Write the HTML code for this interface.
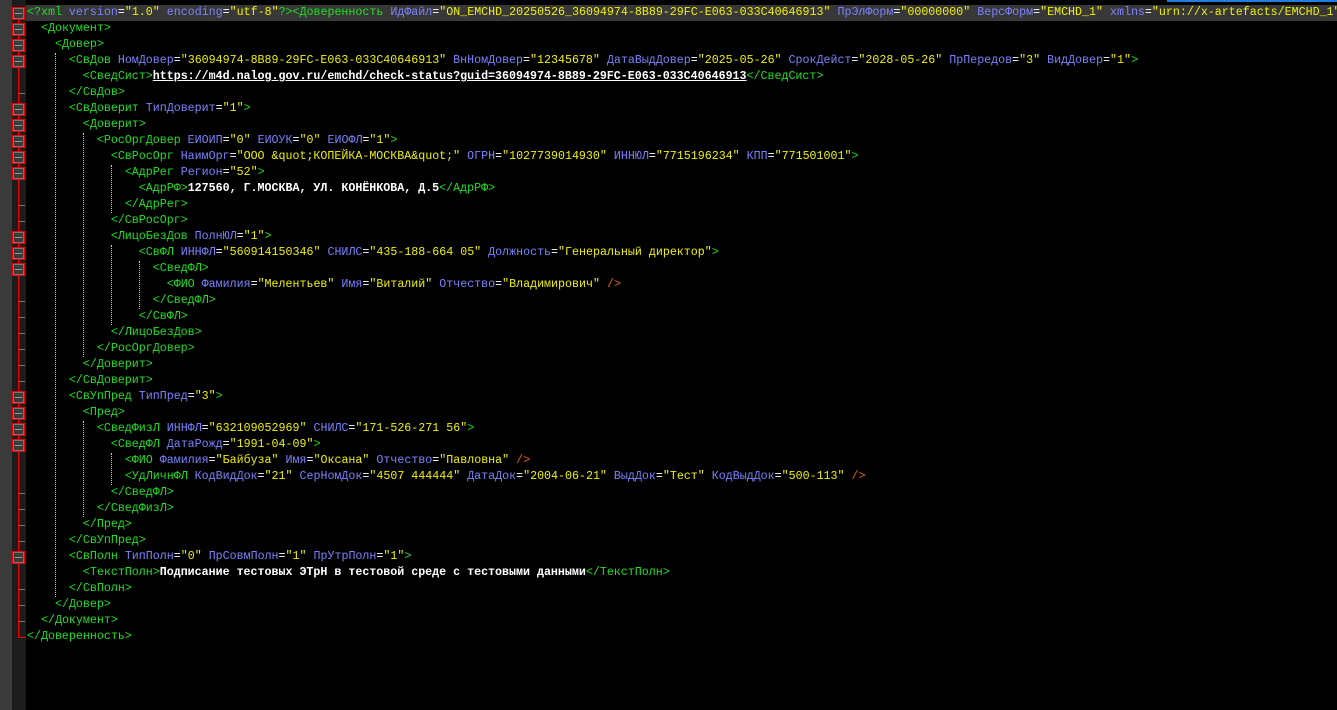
<!DOCTYPE html>
<html><head><meta charset="utf-8"><style>
*{margin:0;padding:0}
body{width:1337px;height:710px;background:#000;overflow:hidden;position:relative;font-family:"Liberation Mono","DejaVu Sans Mono",monospace;font-size:11.65px}
#lm{position:absolute;left:0;top:0;width:12px;height:710px;background:#3a3a3a}
#fm{position:absolute;left:12px;top:0;width:14px;height:710px;background:#1c1c1c}
#topbar{position:absolute;left:1167px;top:0;width:170px;height:2px;background:#1e7fe0}
.cur{position:absolute;left:26px;top:5px;width:1311px;height:16px;background:#383838}
.l{position:absolute;left:27px;height:16px;line-height:16px;white-space:pre;color:#fff}
.t{color:#1ee01e}.a{color:#7a82ff}.v{color:#f0f000}.e{color:#fff}.x{color:#fff;font-weight:bold}.u{color:#fff;font-weight:bold;text-decoration:underline}.s{color:#e0601a}
.g{position:absolute;border-left:1px dotted #ccc;width:0}
.rl{position:absolute;left:18px;width:1px;background:#e00}
.b{position:absolute;left:12px;width:11px;height:11px;border:1px solid #e00;background:#3a3a3a}
.b:after{content:"";position:absolute;left:2px;top:5px;width:7px;height:1px;background:#999}
.b:before{content:"";position:absolute;left:0;top:0;width:9px;height:9px;border:1px solid #777}
.k{position:absolute;left:19px;width:6px;height:1px;background:#777}
</style></head><body>
<div id="lm"></div><div id="fm"></div><div id="topbar"></div>
<div class="cur"></div>
<div class="rl" style="top:12px;height:626px"></div>
<div style="position:absolute;left:18px;top:637px;width:8px;height:1px;background:#e00"></div>

<div class="g" style="left:55px;top:53px;height:544px"></div>
<div class="g" style="left:83px;top:133px;height:224px"></div>
<div class="g" style="left:83px;top:421px;height:96px"></div>
<div class="g" style="left:111px;top:165px;height:48px"></div>
<div class="g" style="left:111px;top:245px;height:80px"></div>
<div class="g" style="left:111px;top:453px;height:32px"></div>
<div class="g" style="left:139px;top:261px;height:48px"></div>

<div class="b" style="top:7px"></div><div class="b" style="top:23px"></div><div class="b" style="top:39px"></div><div class="b" style="top:55px"></div>
<div class="k" style="top:93px"></div>
<div class="b" style="top:103px"></div><div class="b" style="top:119px"></div><div class="b" style="top:135px"></div><div class="b" style="top:151px"></div><div class="b" style="top:167px"></div>
<div class="k" style="top:205px"></div><div class="k" style="top:221px"></div>
<div class="b" style="top:231px"></div><div class="b" style="top:247px"></div><div class="b" style="top:263px"></div>
<div class="k" style="top:301px"></div><div class="k" style="top:317px"></div><div class="k" style="top:333px"></div><div class="k" style="top:349px"></div><div class="k" style="top:365px"></div><div class="k" style="top:381px"></div>
<div class="b" style="top:391px"></div><div class="b" style="top:407px"></div><div class="b" style="top:423px"></div><div class="b" style="top:439px"></div>
<div class="k" style="top:493px"></div><div class="k" style="top:509px"></div><div class="k" style="top:525px"></div><div class="k" style="top:541px"></div>
<div class="b" style="top:551px"></div>
<div class="k" style="top:589px"></div><div class="k" style="top:605px"></div><div class="k" style="top:621px"></div>

<div class="l" style="top:5px"><span class="t">&lt;?xml </span><span class="a">version</span><span class="e">=</span><span class="v">"1.0"</span> <span class="a">encoding</span><span class="e">=</span><span class="v">"utf-8"</span><span class="t">?&gt;&lt;Доверенность </span><span class="a">ИдФайл</span><span class="e">=</span><span class="v">"ON_EMCHD_20250526_36094974-8B89-29FC-E063-033C40646913"</span> <span class="a">ПрЭлФорм</span><span class="e">=</span><span class="v">"00000000"</span> <span class="a">ВерсФорм</span><span class="e">=</span><span class="v">"EMCHD_1"</span> <span class="a">xmlns</span><span class="e">=</span><span class="v">"urn://x-artefacts/EMCHD_1"</span></div>
<div class="l" style="top:21px">  <span class="t">&lt;Документ&gt;</span></div>
<div class="l" style="top:37px">    <span class="t">&lt;Довер&gt;</span></div>
<div class="l" style="top:53px">      <span class="t">&lt;СвДов </span><span class="a">НомДовер</span><span class="e">=</span><span class="v">"36094974-8B89-29FC-E063-033C40646913"</span> <span class="a">ВнНомДовер</span><span class="e">=</span><span class="v">"12345678"</span> <span class="a">ДатаВыдДовер</span><span class="e">=</span><span class="v">"2025-05-26"</span> <span class="a">СрокДейст</span><span class="e">=</span><span class="v">"2028-05-26"</span> <span class="a">ПрПередов</span><span class="e">=</span><span class="v">"3"</span> <span class="a">ВидДовер</span><span class="e">=</span><span class="v">"1"</span><span class="t">&gt;</span></div>
<div class="l" style="top:69px">        <span class="t">&lt;СведСист&gt;</span><span class="u">https://m4d.nalog.gov.ru/emchd/check-status?guid=36094974-8B89-29FC-E063-033C40646913</span><span class="t">&lt;/СведСист&gt;</span></div>
<div class="l" style="top:85px">      <span class="t">&lt;/СвДов&gt;</span></div>
<div class="l" style="top:101px">      <span class="t">&lt;СвДоверит </span><span class="a">ТипДоверит</span><span class="e">=</span><span class="v">"1"</span><span class="t">&gt;</span></div>
<div class="l" style="top:117px">        <span class="t">&lt;Доверит&gt;</span></div>
<div class="l" style="top:133px">          <span class="t">&lt;РосОргДовер </span><span class="a">ЕИОИП</span><span class="e">=</span><span class="v">"0"</span> <span class="a">ЕИОУК</span><span class="e">=</span><span class="v">"0"</span> <span class="a">ЕИОФЛ</span><span class="e">=</span><span class="v">"1"</span><span class="t">&gt;</span></div>
<div class="l" style="top:149px">            <span class="t">&lt;СвРосОрг </span><span class="a">НаимОрг</span><span class="e">=</span><span class="v">"ООО &amp;quot;КОПЕЙКА-МОСКВА&amp;quot;"</span> <span class="a">ОГРН</span><span class="e">=</span><span class="v">"1027739014930"</span> <span class="a">ИННЮЛ</span><span class="e">=</span><span class="v">"7715196234"</span> <span class="a">КПП</span><span class="e">=</span><span class="v">"771501001"</span><span class="t">&gt;</span></div>
<div class="l" style="top:165px">              <span class="t">&lt;АдрРег </span><span class="a">Регион</span><span class="e">=</span><span class="v">"52"</span><span class="t">&gt;</span></div>
<div class="l" style="top:181px">                <span class="t">&lt;АдрРФ&gt;</span><span class="x">127560, Г.МОСКВА, УЛ. КОНЁНКОВА, Д.5</span><span class="t">&lt;/АдрРФ&gt;</span></div>
<div class="l" style="top:197px">              <span class="t">&lt;/АдрРег&gt;</span></div>
<div class="l" style="top:213px">            <span class="t">&lt;/СвРосОрг&gt;</span></div>
<div class="l" style="top:229px">            <span class="t">&lt;ЛицоБезДов </span><span class="a">ПолнЮЛ</span><span class="e">=</span><span class="v">"1"</span><span class="t">&gt;</span></div>
<div class="l" style="top:245px">                <span class="t">&lt;СвФЛ </span><span class="a">ИННФЛ</span><span class="e">=</span><span class="v">"560914150346"</span> <span class="a">СНИЛС</span><span class="e">=</span><span class="v">"435-188-664 05"</span> <span class="a">Должность</span><span class="e">=</span><span class="v">"Генеральный директор"</span><span class="t">&gt;</span></div>
<div class="l" style="top:261px">                  <span class="t">&lt;СведФЛ&gt;</span></div>
<div class="l" style="top:277px">                    <span class="t">&lt;ФИО </span><span class="a">Фамилия</span><span class="e">=</span><span class="v">"Мелентьев"</span> <span class="a">Имя</span><span class="e">=</span><span class="v">"Виталий"</span> <span class="a">Отчество</span><span class="e">=</span><span class="v">"Владимирович"</span> <span class="s">/&gt;</span></div>
<div class="l" style="top:293px">                  <span class="t">&lt;/СведФЛ&gt;</span></div>
<div class="l" style="top:309px">                <span class="t">&lt;/СвФЛ&gt;</span></div>
<div class="l" style="top:325px">            <span class="t">&lt;/ЛицоБезДов&gt;</span></div>
<div class="l" style="top:341px">          <span class="t">&lt;/РосОргДовер&gt;</span></div>
<div class="l" style="top:357px">        <span class="t">&lt;/Доверит&gt;</span></div>
<div class="l" style="top:373px">      <span class="t">&lt;/СвДоверит&gt;</span></div>
<div class="l" style="top:389px">      <span class="t">&lt;СвУпПред </span><span class="a">ТипПред</span><span class="e">=</span><span class="v">"3"</span><span class="t">&gt;</span></div>
<div class="l" style="top:405px">        <span class="t">&lt;Пред&gt;</span></div>
<div class="l" style="top:421px">          <span class="t">&lt;СведФизЛ </span><span class="a">ИННФЛ</span><span class="e">=</span><span class="v">"632109052969"</span> <span class="a">СНИЛС</span><span class="e">=</span><span class="v">"171-526-271 56"</span><span class="t">&gt;</span></div>
<div class="l" style="top:437px">            <span class="t">&lt;СведФЛ </span><span class="a">ДатаРожд</span><span class="e">=</span><span class="v">"1991-04-09"</span><span class="t">&gt;</span></div>
<div class="l" style="top:453px">              <span class="t">&lt;ФИО </span><span class="a">Фамилия</span><span class="e">=</span><span class="v">"Байбуза"</span> <span class="a">Имя</span><span class="e">=</span><span class="v">"Оксана"</span> <span class="a">Отчество</span><span class="e">=</span><span class="v">"Павловна"</span> <span class="s">/&gt;</span></div>
<div class="l" style="top:469px">              <span class="t">&lt;УдЛичнФЛ </span><span class="a">КодВидДок</span><span class="e">=</span><span class="v">"21"</span> <span class="a">СерНомДок</span><span class="e">=</span><span class="v">"4507 444444"</span> <span class="a">ДатаДок</span><span class="e">=</span><span class="v">"2004-06-21"</span> <span class="a">ВыдДок</span><span class="e">=</span><span class="v">"Тест"</span> <span class="a">КодВыдДок</span><span class="e">=</span><span class="v">"500-113"</span> <span class="s">/&gt;</span></div>
<div class="l" style="top:485px">            <span class="t">&lt;/СведФЛ&gt;</span></div>
<div class="l" style="top:501px">          <span class="t">&lt;/СведФизЛ&gt;</span></div>
<div class="l" style="top:517px">        <span class="t">&lt;/Пред&gt;</span></div>
<div class="l" style="top:533px">      <span class="t">&lt;/СвУпПред&gt;</span></div>
<div class="l" style="top:549px">      <span class="t">&lt;СвПолн </span><span class="a">ТипПолн</span><span class="e">=</span><span class="v">"0"</span> <span class="a">ПрСовмПолн</span><span class="e">=</span><span class="v">"1"</span> <span class="a">ПрУтрПолн</span><span class="e">=</span><span class="v">"1"</span><span class="t">&gt;</span></div>
<div class="l" style="top:565px">        <span class="t">&lt;ТекстПолн&gt;</span><span class="x">Подписание тестовых ЭТрН в тестовой среде с тестовыми данными</span><span class="t">&lt;/ТекстПолн&gt;</span></div>
<div class="l" style="top:581px">      <span class="t">&lt;/СвПолн&gt;</span></div>
<div class="l" style="top:597px">    <span class="t">&lt;/Довер&gt;</span></div>
<div class="l" style="top:613px">  <span class="t">&lt;/Документ&gt;</span></div>
<div class="l" style="top:629px"><span class="t">&lt;/Доверенность&gt;</span></div>
</body></html>
